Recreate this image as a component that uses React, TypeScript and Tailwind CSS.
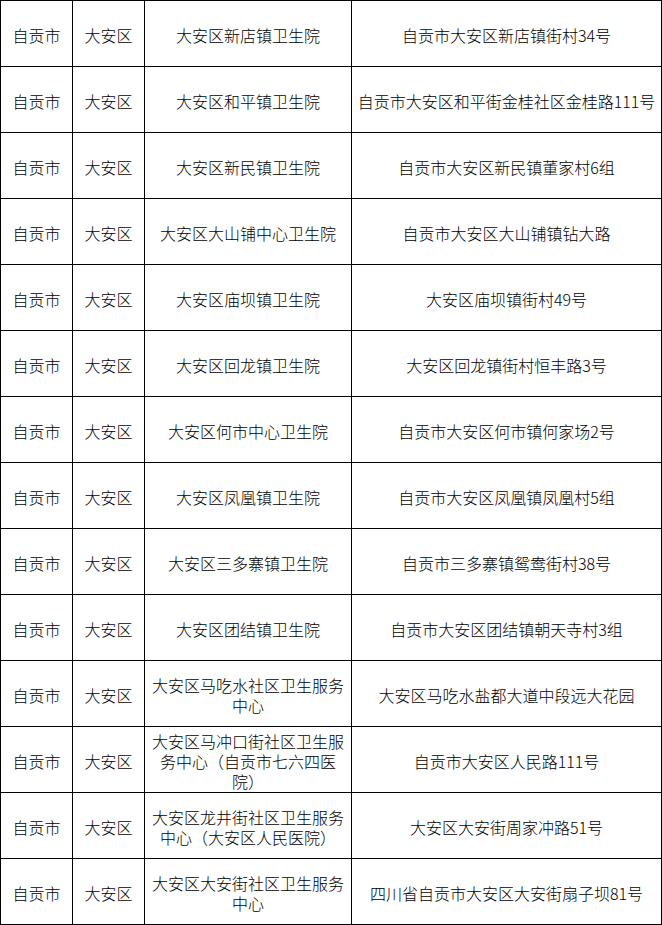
import { Fragment } from "react";
import type { ReactNode } from "react";

const rows: { name: string[]; address: string }[] = [
  { name: ["大安区新店镇卫生院"], address: "自贡市大安区新店镇街村34号" },
  { name: ["大安区和平镇卫生院"], address: "自贡市大安区和平街金桂社区金桂路111号" },
  { name: ["大安区新民镇卫生院"], address: "自贡市大安区新民镇董家村6组" },
  { name: ["大安区大山铺中心卫生院"], address: "自贡市大安区大山铺镇钻大路" },
  { name: ["大安区庙坝镇卫生院"], address: "大安区庙坝镇街村49号" },
  { name: ["大安区回龙镇卫生院"], address: "大安区回龙镇街村恒丰路3号" },
  { name: ["大安区何市中心卫生院"], address: "自贡市大安区何市镇何家场2号" },
  { name: ["大安区凤凰镇卫生院"], address: "自贡市大安区凤凰镇凤凰村5组" },
  { name: ["大安区三多寨镇卫生院"], address: "自贡市三多寨镇鸳鸯街村38号" },
  { name: ["大安区团结镇卫生院"], address: "自贡市大安区团结镇朝天寺村3组" },
  { name: ["大安区马吃水社区卫生服务", "中心"], address: "大安区马吃水盐都大道中段远大花园" },
  {
    name: ["大安区马冲口街社区卫生服", "务中心（自贡市七六四医", "院）"],
    address: "自贡市大安区人民路111号",
  },
  { name: ["大安区龙井街社区卫生服务", "中心（大安区人民医院）"], address: "大安区大安街周家冲路51号" },
  { name: ["大安区大安街社区卫生服务", "中心"], address: "四川省自贡市大安区大安街扇子坝81号" },
];

const Cell = ({ children }: { children: ReactNode }) => (
  <div className="flex h-[65px] flex-col items-center justify-center bg-white pt-[2px] text-center leading-[20px]">
    {children}
  </div>
);

export default function App() {
  return (
    <div className="w-[662px] bg-white font-['Noto_Sans_CJK_SC',sans-serif] text-[16px] font-light text-black">
      <div className="grid grid-cols-[71px_71px_206px_309px] gap-px bg-black p-px">
        {rows.map((row) => (
          <Fragment key={row.address}>
            <Cell>自贡市</Cell>
            <Cell>大安区</Cell>
            <Cell>
              {row.name.map((line) => (
                <span key={line}>{line}</span>
              ))}
            </Cell>
            <Cell>{row.address}</Cell>
          </Fragment>
        ))}
      </div>
    </div>
  );
}
